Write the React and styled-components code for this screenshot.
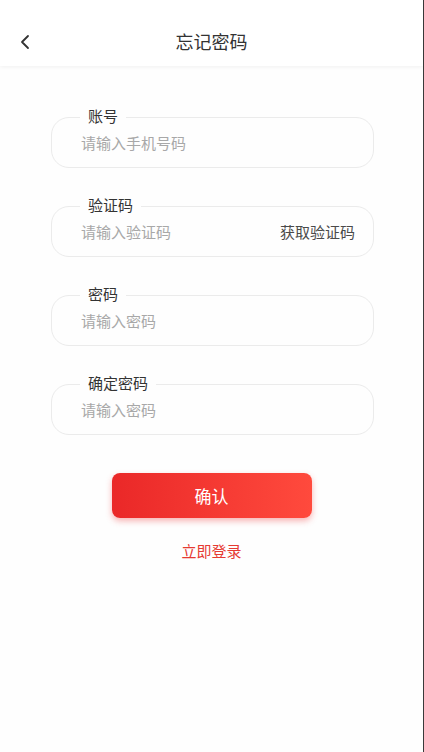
import styled, { createGlobalStyle } from "styled-components";

const GlobalStyle = createGlobalStyle`
  html, body {
    margin: 0;
    padding: 0;
    background: #ffffff;
  }
  * {
    box-sizing: border-box;
  }
  body {
    font-family: "Noto Sans CJK SC", "Noto Sans", sans-serif;
  }
`;

const Page = styled.div`
  width: 424px;
  min-height: 752px;
  background: #fefefe;
  border-right: 1px solid #3a3a3a;
  display: flex;
  flex-direction: column;
`;

const Header = styled.header`
  height: 66px;
  padding-top: 19px;
  padding-bottom: 2px;
  background: #ffffff;
  box-shadow: 0 1px 4px rgba(0, 0, 0, 0.06);
  display: flex;
  align-items: center;
`;

const Back = styled.button`
  width: 50px;
  height: 45px;
  border: none;
  background: none;
  padding: 0 0 0 19px;
  display: flex;
  align-items: center;
  cursor: pointer;
`;

const Title = styled.h1`
  flex: 1;
  margin: 0 50px 0 0;
  text-align: center;
  font-size: 18px;
  font-weight: 400;
  color: #333333;
  line-height: 45px;
`;

const Form = styled.form`
  padding: 51px 49px 0 51px;
  display: flex;
  flex-direction: column;
  gap: 38px;
`;

const Field = styled.div`
  position: relative;
  height: 51px;
  border: 1px solid #ebebeb;
  border-radius: 18px;
  padding: 0 18px 0 29px;
  display: flex;
  align-items: center;
  justify-content: space-between;
`;

const Label = styled.span`
  position: absolute;
  left: 28px;
  top: -12px;
  padding: 0 8px;
  background: #fefefe;
  font-size: 15px;
  line-height: 20px;
  color: #333333;
`;

const Input = styled.input`
  flex: 1;
  min-width: 0;
  border: none;
  outline: none;
  background: transparent;
  padding: 0;
  font-family: inherit;
  font-size: 15px;
  color: #333333;
  &::placeholder {
    color: #a8a8a8;
  }
`;

const CodeButton = styled.span`
  font-size: 15px;
  color: #4a4a4a;
  white-space: nowrap;
`;

const Actions = styled.div`
  display: flex;
  flex-direction: column;
  align-items: center;
  padding-top: 38px;
`;

const Submit = styled.button`
  width: 200px;
  height: 45px;
  border: none;
  border-radius: 8px;
  background: linear-gradient(90deg, #ea2828 0%, #ff4a3d 100%);
  box-shadow: 0 3px 6px rgba(234, 40, 40, 0.35);
  color: #ffffff;
  font-family: inherit;
  font-size: 17px;
  cursor: pointer;
`;

const LoginLink = styled.a`
  margin-top: 22px;
  font-size: 15px;
  color: #e63a32;
  cursor: pointer;
`;

const fields = [
  { label: "账号", placeholder: "请输入手机号码" },
  { label: "验证码", placeholder: "请输入验证码", code: true },
  { label: "密码", placeholder: "请输入密码", type: "password" },
  { label: "确定密码", placeholder: "请输入密码", type: "password" },
];

const App = () => {
  return (
    <Page>
      <GlobalStyle />
      <Header>
        <Back aria-label="返回">
          <svg width="14" height="16" viewBox="0 0 14 16" fill="none">
            <path
              d="M9 2L3 8l6 6"
              stroke="#333"
              strokeWidth="1.8"
              strokeLinecap="round"
              strokeLinejoin="round"
            />
          </svg>
        </Back>
        <Title>忘记密码</Title>
      </Header>
      <Form onSubmit={(e) => e.preventDefault()}>
        {fields.map((f) => (
          <Field key={f.label}>
            <Label>{f.label}</Label>
            <Input type={f.type || "text"} placeholder={f.placeholder} />
            {f.code && <CodeButton>获取验证码</CodeButton>}
          </Field>
        ))}
      </Form>
      <Actions>
        <Submit>确认</Submit>
        <LoginLink>立即登录</LoginLink>
      </Actions>
    </Page>
  );
};

export default App;
